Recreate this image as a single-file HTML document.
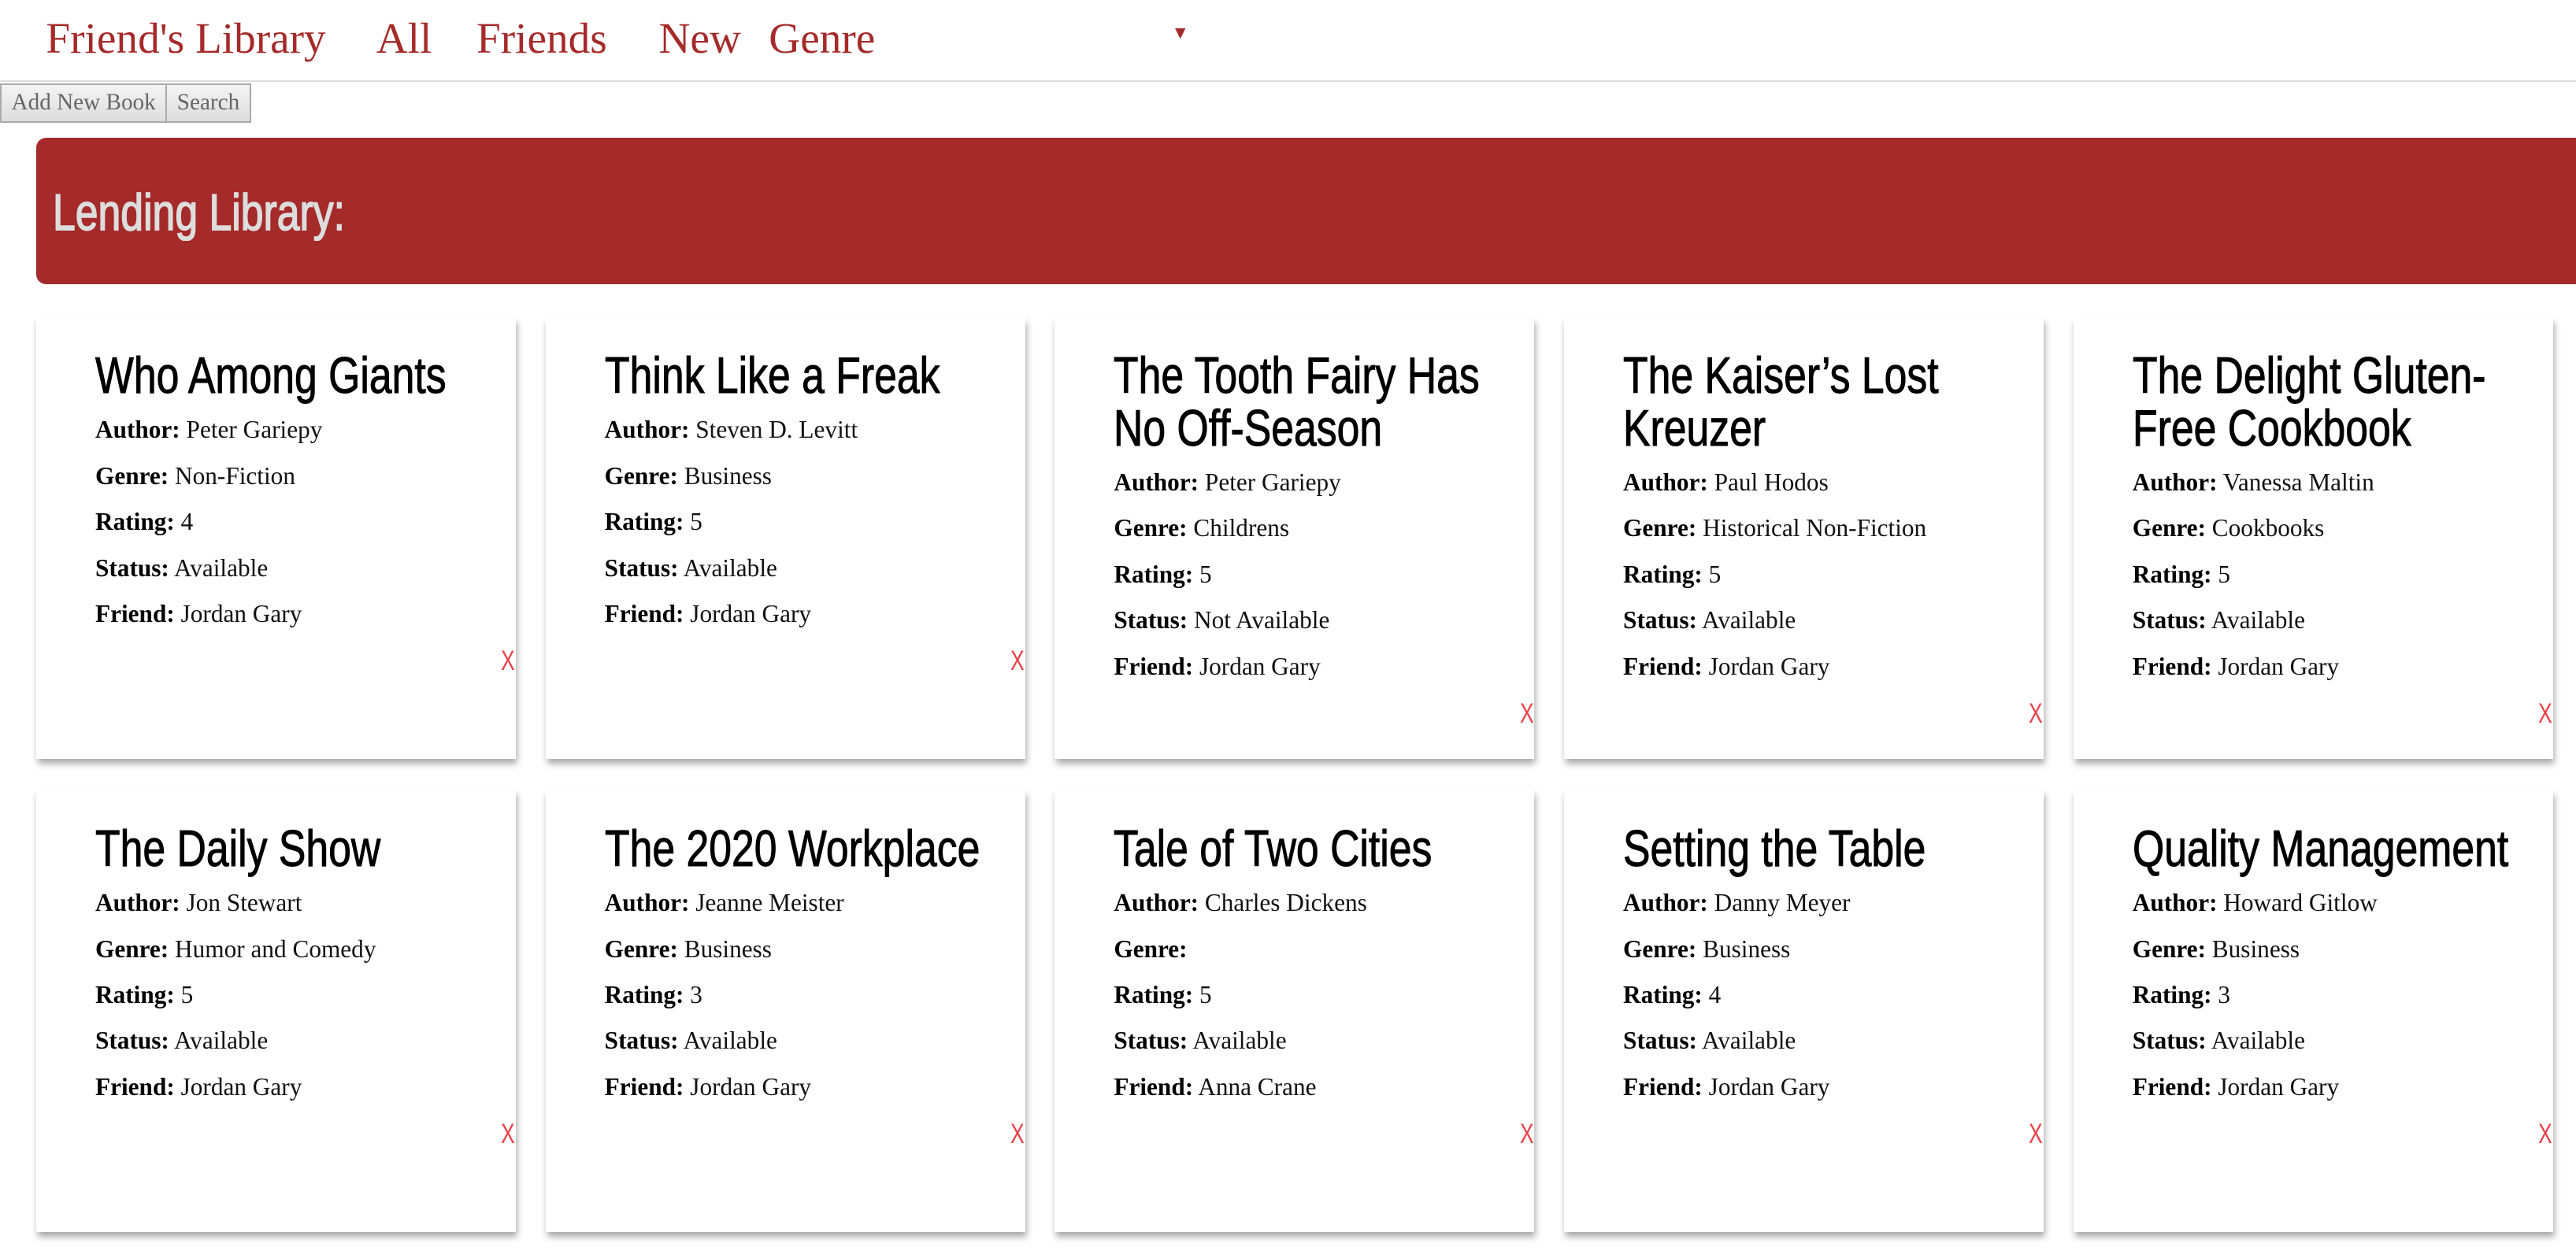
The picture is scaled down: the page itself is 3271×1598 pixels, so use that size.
<!DOCTYPE html>
<html><head><meta charset="utf-8"><style>
html,body{margin:0;padding:0;background:#fff;overflow:hidden}
body{width:3271px;height:1598px}
#w{zoom:2.0861;width:1568px;height:766px;position:relative;overflow:hidden}
.nav{height:49px;border-bottom:1px solid #ddd;position:relative;font-family:"Liberation Serif",serif;color:#a52a2a;font-size:26.5px}
.nav span{position:absolute;top:8px}
.btns{position:absolute;top:51px;left:0;display:flex}
.btns div{height:22px;border:1px solid #aaa;background:linear-gradient(#f4f4f4,#ddd);font-family:"Liberation Serif",serif;font-size:14px;color:#666;line-height:22px;padding:0 6px}
.banner{position:absolute;left:22px;top:84px;width:1560px;height:89px;background:#a52a2a;border-radius:6px}
.banner h1{margin:0;position:absolute;left:10px;top:27px;font-family:"Liberation Sans",sans-serif;font-weight:normal;font-size:31px;color:#ddd;transform:scaleX(.8);transform-origin:left;white-space:nowrap;-webkit-text-stroke:.8px #ddd}
.card{position:absolute;width:256px;height:249px;padding:20px 0 0 36px;background:#fff;box-shadow:1px 3px 4px rgba(0,0,0,.35)}
.card h2{margin:0 0 3px;width:322px;font-family:"Liberation Sans",sans-serif;font-weight:normal;font-size:31px;line-height:32px;color:#000;transform:scaleX(.8);transform-origin:left;-webkit-text-stroke:.5px #000}
.card p{margin:0;font-family:"Liberation Serif",serif;font-size:15px;line-height:28px;color:#111;white-space:nowrap}
.card p b{color:#000}
.card .x{font-family:"Liberation Sans",sans-serif;color:#e8434a;font-size:17px;line-height:29px;position:relative;left:247px;width:10px;transform:scaleX(.75);transform-origin:left}
</style></head><body><div id="w">
<div class="nav"><span style="left:28px">Friend's Library</span><span style="left:229px">All</span><span style="left:290px">Friends</span><span style="left:401px">New</span><span style="left:468px">Genre</span><span style="left:713px;top:14px;font-size:11px">▼</span></div>
<div class="btns"><div>Add New Book</div><div style="border-left:none">Search</div></div>
<div class="banner"><h1>Lending Library:</h1></div>

<div class="card" style="left:22px;top:193px"><h2>Who Among Giants</h2><p><b>Author:</b> Peter Gariepy</p><p><b>Genre:</b> Non-Fiction</p><p><b>Rating:</b> 4</p><p><b>Status:</b> Available</p><p><b>Friend:</b> Jordan Gary</p><div class="x">X</div></div>
<div class="card" style="left:332px;top:193px"><h2>Think Like a Freak</h2><p><b>Author:</b> Steven D. Levitt</p><p><b>Genre:</b> Business</p><p><b>Rating:</b> 5</p><p><b>Status:</b> Available</p><p><b>Friend:</b> Jordan Gary</p><div class="x">X</div></div>
<div class="card" style="left:642px;top:193px"><h2>The Tooth Fairy Has No Off-Season</h2><p><b>Author:</b> Peter Gariepy</p><p><b>Genre:</b> Childrens</p><p><b>Rating:</b> 5</p><p><b>Status:</b> Not Available</p><p><b>Friend:</b> Jordan Gary</p><div class="x">X</div></div>
<div class="card" style="left:952px;top:193px"><h2>The Kaiser’s Lost Kreuzer</h2><p><b>Author:</b> Paul Hodos</p><p><b>Genre:</b> Historical Non-Fiction</p><p><b>Rating:</b> 5</p><p><b>Status:</b> Available</p><p><b>Friend:</b> Jordan Gary</p><div class="x">X</div></div>
<div class="card" style="left:1262px;top:193px"><h2>The Delight Gluten-Free Cookbook</h2><p><b>Author:</b> Vanessa Maltin</p><p><b>Genre:</b> Cookbooks</p><p><b>Rating:</b> 5</p><p><b>Status:</b> Available</p><p><b>Friend:</b> Jordan Gary</p><div class="x">X</div></div>

<div class="card" style="left:22px;top:481px"><h2>The Daily Show</h2><p><b>Author:</b> Jon Stewart</p><p><b>Genre:</b> Humor and Comedy</p><p><b>Rating:</b> 5</p><p><b>Status:</b> Available</p><p><b>Friend:</b> Jordan Gary</p><div class="x">X</div></div>
<div class="card" style="left:332px;top:481px"><h2>The 2020 Workplace</h2><p><b>Author:</b> Jeanne Meister</p><p><b>Genre:</b> Business</p><p><b>Rating:</b> 3</p><p><b>Status:</b> Available</p><p><b>Friend:</b> Jordan Gary</p><div class="x">X</div></div>
<div class="card" style="left:642px;top:481px"><h2>Tale of Two Cities</h2><p><b>Author:</b> Charles Dickens</p><p><b>Genre:</b> </p><p><b>Rating:</b> 5</p><p><b>Status:</b> Available</p><p><b>Friend:</b> Anna Crane</p><div class="x">X</div></div>
<div class="card" style="left:952px;top:481px"><h2>Setting the Table</h2><p><b>Author:</b> Danny Meyer</p><p><b>Genre:</b> Business</p><p><b>Rating:</b> 4</p><p><b>Status:</b> Available</p><p><b>Friend:</b> Jordan Gary</p><div class="x">X</div></div>
<div class="card" style="left:1262px;top:481px"><h2>Quality Management</h2><p><b>Author:</b> Howard Gitlow</p><p><b>Genre:</b> Business</p><p><b>Rating:</b> 3</p><p><b>Status:</b> Available</p><p><b>Friend:</b> Jordan Gary</p><div class="x">X</div></div>
</div></body></html>
